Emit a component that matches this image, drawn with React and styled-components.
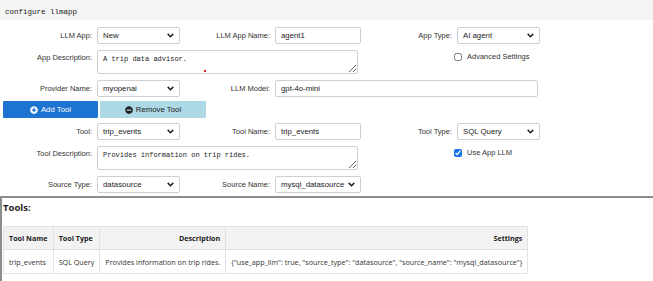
import React from 'react';
import styled, { createGlobalStyle } from 'styled-components';
import { FaPlusCircle, FaMinusCircle } from 'react-icons/fa';

const GlobalStyle = createGlobalStyle`
  body {
    margin: 0;
    background: #fff;
    font-family: "Liberation Sans", Arial, sans-serif;
    color: #333;
  }
  * {
    box-sizing: border-box;
  }
`;

const Page = styled.div`
  width: 653px;
  height: 281px;
  overflow: hidden;
  display: flex;
  flex-direction: column;
`;

const TitleBar = styled.div`
  flex: 0 0 20px;
  height: 20px;
  padding: 3px 5px 0;
  display: flex;
  align-items: center;
  background: #f4f4f4;
  font-family: "Liberation Mono", monospace;
  font-size: 7.5px;
  color: #222;
`;

const FormGrid = styled.div`
  flex: none;
  display: grid;
  grid-template-columns: 97px 83px 95px 86px 96px 83px;
  grid-template-rows: 17px 24px 17px;
  row-gap: 6px;
  align-items: center;
  margin-top: ${({ top }) => top || 0}px;
`;

const Label = styled.label`
  justify-self: end;
  align-self: ${({ tall }) => (tall ? 'start' : 'center')};
  padding: ${({ tall }) => (tall ? '3px 5px 0 0' : '0 5px 0 0')};
  font-size: 7.5px;
  color: #333;
  white-space: nowrap;
`;

const Field = styled.div`
  position: relative;
  height: ${({ tall }) => (tall ? 24 : 17)}px;
  grid-column: ${({ span }) => (span ? `span ${span}` : 'auto')};
  width: ${({ width }) => (width ? `${width}px` : '100%')};
`;

const TextInput = styled.input`
  display: block;
  width: 100%;
  height: 17px;
  padding: 0 5px;
  border: 1px solid #cfcfcf;
  border-radius: 2px;
  font-family: "Liberation Sans", Arial, sans-serif;
  font-size: 7.8px;
  color: #222;
  outline: none;
`;

const SelectBox = styled.select`
  display: block;
  width: 100%;
  height: 17px;
  padding: 0 14px 0 5px;
  border: 1px solid #cfcfcf;
  border-radius: 2px;
  background: #fff;
  appearance: none;
  font-family: "Liberation Sans", Arial, sans-serif;
  font-size: 7.8px;
  color: #222;
  outline: none;
`;

const Chevron = styled.svg`
  position: absolute;
  right: 6px;
  top: 6px;
  width: 7px;
  height: 5px;
  pointer-events: none;
`;

const TextArea = styled.textarea`
  display: block;
  width: 261px;
  height: 24px;
  padding: 4px 5px;
  border: 1px solid #cfcfcf;
  border-radius: 2px;
  font-family: "Liberation Mono", monospace;
  font-size: 7px;
  color: #222;
  resize: both;
  outline: none;
`;

const RedDot = styled.span`
  position: absolute;
  left: 107px;
  top: 20px;
  width: 2px;
  height: 2px;
  background: #e02020;
`;

const CheckRow = styled.label`
  grid-column: ${({ col }) => col};
  align-self: start;
  margin: 2px 0 0 -3px;
  display: flex;
  align-items: center;
  gap: 5px;
  font-size: 7.5px;
  color: #333;
  white-space: nowrap;
`;

const Check = styled.input`
  width: 8px;
  height: 8px;
  margin: 0;
  accent-color: #1a73e8;
`;

const ButtonBar = styled.div`
  flex: none;
  display: flex;
  gap: 2px;
  padding-left: 3px;
  margin: 4px 0 5px;
`;

const Button = styled.button`
  width: ${({ width }) => width}px;
  height: 17px;
  display: flex;
  align-items: center;
  justify-content: center;
  gap: 3px;
  border: none;
  border-radius: 1px;
  padding: 0;
  background: ${({ primary }) => (primary ? '#1c73d2' : '#add8e6')};
  color: ${({ primary }) => (primary ? '#fff' : '#222')};
  font-family: "Liberation Sans", Arial, sans-serif;
  font-size: 7.8px;

  svg {
    width: 8px;
    height: 8px;
  }
`;

const ToolsPanel = styled.div`
  flex: 1;
  margin-top: 3px;
  border-top: 2px solid #8c8c8c;
  border-left: 2px solid #8c8c8c;
  padding: 3px 0 0 1px;
`;

const PanelTitle = styled.div`
  font-family: "Open Sans", sans-serif;
  font-weight: 700;
  font-size: 9.5px;
  color: #222;
  height: 25px;
`;

const Table = styled.table`
  border-collapse: collapse;
  font-family: "Open Sans", sans-serif;
  font-size: 7.2px;
  color: #333;
`;

const Th = styled.th`
  height: 23px;
  padding: 0 5px;
  background: #f2f2f2;
  border: 1px solid #e2e2e2;
  text-align: ${({ align }) => align || 'right'};
  font-weight: 700;
  color: #222;
  white-space: nowrap;
`;

const Td = styled.td`
  height: 24px;
  padding: 0 5px;
  border: 1px solid #e2e2e2;
  white-space: nowrap;
`;

const Select = ({ value, width }) => (
  <Field width={width}>
    <SelectBox defaultValue={value}>
      <option>{value}</option>
    </SelectBox>
    <Chevron viewBox="0 0 10 7">
      <path d="M1 1.2 L5 5.2 L9 1.2" fill="none" stroke="#222" strokeWidth="2.2" />
    </Chevron>
  </Field>
);

const App = () => (
  <Page>
    <GlobalStyle />
    <TitleBar>configure llmapp</TitleBar>

    <FormGrid top={7}>
      <Label>LLM App:</Label>
      <Select value="New" />
      <Label>LLM App Name:</Label>
      <Field>
        <TextInput defaultValue="agent1" />
      </Field>
      <Label>App Type:</Label>
      <Select value="AI agent" />

      <Label tall>App Description:</Label>
      <Field span={3} tall>
        <TextArea defaultValue="A trip data advisor." />
        <RedDot />
      </Field>
      <span />
      <CheckRow col={6}>
        <Check type="checkbox" />
        Advanced Settings
      </CheckRow>

      <Label>Provider Name:</Label>
      <Select value="myopenai" />
      <Label>LLM Model:</Label>
      <Field span={3} width={263}>
        <TextInput defaultValue="gpt-4o-mini" />
      </Field>
    </FormGrid>

    <ButtonBar>
      <Button primary width={95}>
        <FaPlusCircle />
        Add Tool
      </Button>
      <Button width={106}>
        <FaMinusCircle />
        Remove Tool
      </Button>
    </ButtonBar>

    <FormGrid>
      <Label>Tool:</Label>
      <Select value="trip_events" />
      <Label>Tool Name:</Label>
      <Field>
        <TextInput defaultValue="trip_events" />
      </Field>
      <Label>Tool Type:</Label>
      <Select value="SQL Query" />

      <Label tall>Tool Description:</Label>
      <Field span={3} tall>
        <TextArea defaultValue="Provides information on trip rides." />
      </Field>
      <span />
      <CheckRow col={6}>
        <Check type="checkbox" defaultChecked />
        Use App LLM
      </CheckRow>

      <Label>Source Type:</Label>
      <Select value="datasource" />
      <Label>Source Name:</Label>
      <Select value="mysql_datasource" />
    </FormGrid>

    <ToolsPanel>
      <PanelTitle>Tools:</PanelTitle>
      <Table>
        <thead>
          <tr>
            <Th align="left">Tool Name</Th>
            <Th align="left">Tool Type</Th>
            <Th>Description</Th>
            <Th>Settings</Th>
          </tr>
        </thead>
        <tbody>
          <tr>
            <Td>trip_events</Td>
            <Td>SQL Query</Td>
            <Td>Provides information on trip rides.</Td>
            <Td>
              {'{"use_app_llm": true, "source_type": "datasource", "source_name": "mysql_datasource"}'}
            </Td>
          </tr>
        </tbody>
      </Table>
    </ToolsPanel>
  </Page>
);

export default App;
